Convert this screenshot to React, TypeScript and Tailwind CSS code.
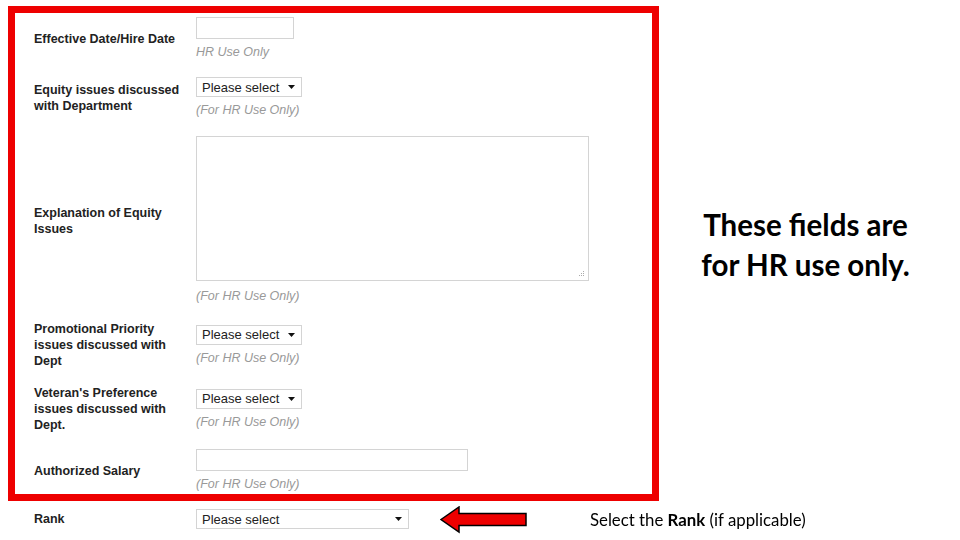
import React from 'react'

const Hint = ({ children, mt = 'mt-[5px]' }: { children: React.ReactNode; mt?: string }) => (
  <p className={`${mt} text-[12.5px] italic leading-4 text-[#999]`}>{children}</p>
)

const Select = ({ w = 'w-[106px]' }: { w?: string }) => (
  <div
    className={`flex h-[20px] ${w} items-center justify-between border border-[#d4d4d4] bg-white pl-[5px] pr-[6px] text-[13px] leading-none text-[#222]`}
  >
    <span>Please select</span>
    <svg width="7" height="4" viewBox="0 0 7 4">
      <path d="M0 0h7L3.5 4z" fill="#111" />
    </svg>
  </div>
)

const Label = ({ children }: { children: React.ReactNode }) => (
  <div className="w-[162px] shrink-0 pr-2 text-[12.5px] font-bold leading-4 text-[#222]">{children}</div>
)

const App = () => {
  return (
    <div className="flex h-[540px] w-[960px] bg-white font-['Liberation_Sans',Arial,sans-serif]">
      <div className="flex w-[659px] flex-col pl-2 pt-[6px]">
        {/* red frame */}
        <div className="flex h-[495px] w-[651px] flex-col border-[7px] border-[#ee0000] pl-[19px] pt-[4px]">
          <div className="flex items-center">
            <Label>Effective Date/Hire Date</Label>
            <div>
              <div className="h-[22px] w-[98px] border border-[#d4d4d4]" />
              <Hint mt="mt-[5px]">HR Use Only</Hint>
            </div>
          </div>

          <div className="mt-[17px] flex items-center">
            <Label>
              Equity issues discussed
              <br />
              with Department
            </Label>
            <div>
              <Select />
              <Hint>(For HR Use Only)</Hint>
            </div>
          </div>

          <div className="mt-[18px] flex items-center">
            <Label>
              <div className="h-[30px] overflow-hidden">
                Explanation of Equity
                <br />
                Issues
              </div>
            </Label>
            <div>
              <div className="flex h-[145px] w-[393px] items-end justify-end border border-[#d4d4d4] p-[3px]">
                <svg width="7" height="7" viewBox="0 0 7 7">
                  <g fill="#aaa">
                    <rect x="5" y="1" width="1" height="1" />
                    <rect x="3" y="3" width="1" height="1" />
                    <rect x="5" y="3" width="1" height="1" />
                    <rect x="1" y="5" width="1" height="1" />
                    <rect x="3" y="5" width="1" height="1" />
                    <rect x="5" y="5" width="1" height="1" />
                  </g>
                </svg>
              </div>
              <Hint mt="mt-[7px]">(For HR Use Only)</Hint>
            </div>
          </div>

          <div className="mt-[17px] flex items-center">
            <Label>
              Promotional Priority
              <br />
              issues discussed with
              <br />
              Dept
            </Label>
            <div>
              <Select />
              <Hint>(For HR Use Only)</Hint>
            </div>
          </div>

          <div className="mt-[16px] flex items-center">
            <Label>
              Veteran's Preference
              <br />
              issues discussed with
              <br />
              Dept.
            </Label>
            <div>
              <Select />
              <Hint>(For HR Use Only)</Hint>
            </div>
          </div>

          <div className="mt-[16px] flex items-center">
            <Label>Authorized Salary</Label>
            <div>
              <div className="h-[22px] w-[272px] border border-[#d4d4d4]" />
              <Hint>(For HR Use Only)</Hint>
            </div>
          </div>
        </div>

        {/* rank row */}
        <div className="mt-[8px] flex items-center pl-[26px]">
          <Label>Rank</Label>
          <Select w="w-[213px]" />
        </div>
      </div>

      <div className="flex flex-1 flex-col pr-[8px]">
        <p className="mt-[205px] text-center font-['Lato',sans-serif] text-[29.5px] font-bold leading-[40px] text-black">
          These fields are
          <br />
          for HR use only.
        </p>
      </div>

      {/* arrow + note */}
      <div className="pointer-events-none fixed left-[440px] top-[506px] flex items-center">
        <svg width="88" height="28" viewBox="0 0 88 28">
          <path
            d="M1 13.5 L19 1 L19 7.5 L86 7.5 L86 19.5 L19 19.5 L19 26 Z"
            fill="#ee0000"
            stroke="#000"
            strokeWidth="1.5"
          />
        </svg>
        <p className="ml-[62px] font-['Lato',sans-serif] text-[16.8px] text-black">
          Select the <b>Rank</b> (if applicable)
        </p>
      </div>
    </div>
  )
}

export default App
